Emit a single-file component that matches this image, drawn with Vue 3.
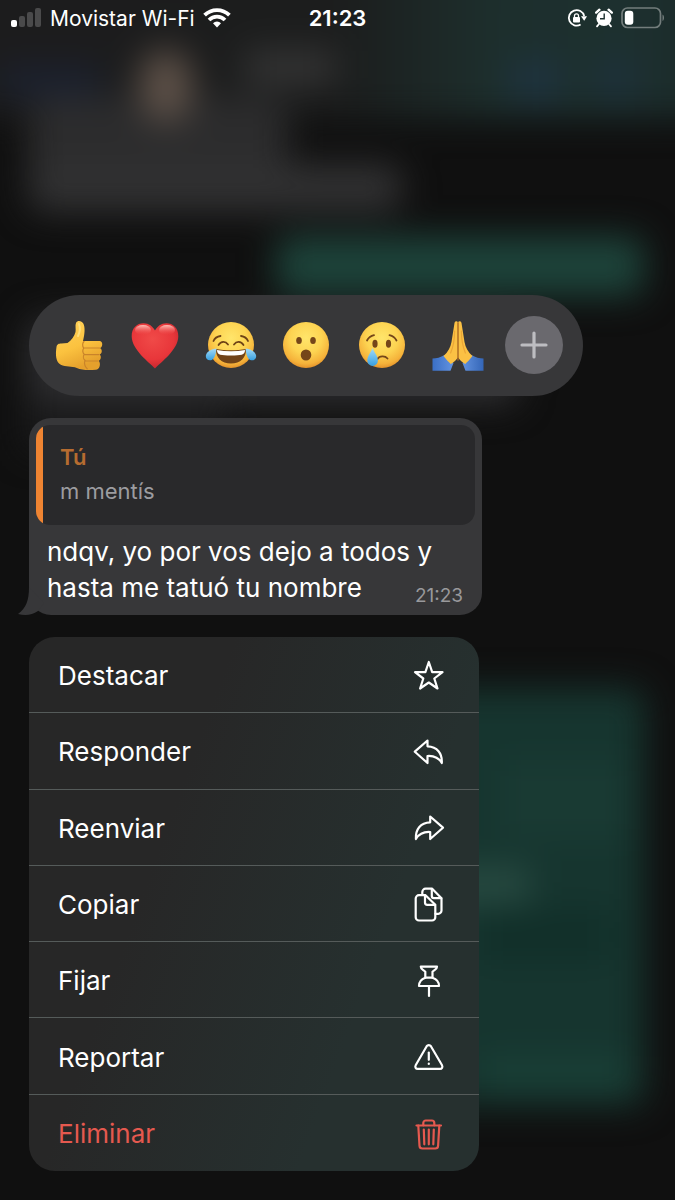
<template>
  <div class="screen">
    <!-- blurred chat behind the menu -->
    <svg class="backdrop" viewBox="0 0 675 1200" preserveAspectRatio="none" aria-hidden="true">
      <defs>
        <linearGradient id="header" x1="0" x2="1" y1="0" y2="0">
          <stop offset="0" stop-color="#1c1c1d" />
          <stop offset="0.5" stop-color="#1c1d1d" />
          <stop offset="0.7" stop-color="#1d2f2d" />
          <stop offset="0.88" stop-color="#1d302f" />
          <stop offset="1" stop-color="#1a2525" />
        </linearGradient>
        <filter id="soft" x="-50%" y="-50%" width="200%" height="200%" color-interpolation-filters="sRGB">
          <feGaussianBlur stdDeviation="17" />
        </filter>
      </defs>
      <rect width="675" height="1200" fill="#101010" />
      <g filter="url(#soft)">
        <rect x="-60" y="-60" width="795" height="178" fill="url(#header)" />
        <rect x="28" y="98" width="260" height="110" rx="16" fill="#2c2c2d" />
        <rect x="28" y="164" width="374" height="48" rx="16" fill="#313132" />
        <rect x="140" y="50" width="52" height="72" rx="26" fill="#5e5148" />
        <rect x="245" y="50" width="90" height="34" fill="#343434" />
        <rect x="0" y="66" width="100" height="30" fill="#1b2130" />
        <rect x="510" y="60" width="50" height="40" fill="#1e3340" />
        <rect x="595" y="60" width="40" height="36" fill="#1d303c" />
        <rect x="276" y="236" width="368" height="60" rx="14" fill="#1d433a" />
        <rect x="28" y="318" width="490" height="86" rx="14" fill="#2f2f31" />
        <rect x="24" y="400" width="200" height="50" fill="#1a1a1b" />
        <rect x="300" y="688" width="345" height="418" rx="14" fill="#16352f" />
        <rect x="500" y="760" width="130" height="80" fill="#193a33" />
        <rect x="440" y="866" width="90" height="38" fill="#274a41" />
        <rect x="480" y="910" width="130" height="50" fill="#112f29" />
        <rect x="480" y="1056" width="150" height="38" fill="#193f36" />
      </g>
    </svg>

    <header class="status">
      <div class="carrier">
        <svg width="32" height="20" viewBox="0 0 32 20" aria-hidden="true">
          <rect x="1" y="12" width="6" height="7" rx="2" fill="#fff" />
          <rect x="9" y="8" width="6" height="11" rx="2" fill="#4a4a4b" />
          <rect x="17" y="4" width="6" height="15" rx="2" fill="#4a4a4b" />
          <rect x="25" y="0" width="6" height="19" rx="2" fill="#4a4a4b" />
        </svg>
        <span>Movistar Wi-Fi</span>
        <svg width="28" height="20" viewBox="0 0 28 20" aria-hidden="true">
          <g fill="none" stroke="#fff" stroke-width="3.8">
            <path d="M1.6 7.2a17.6 17.6 0 0 1 24.8 0" />
            <path d="M6 12a11.4 11.4 0 0 1 16 0" />
          </g>
          <path d="M14 19.4l-4-4.2a5.6 5.6 0 0 1 8 0z" fill="#fff" />
        </svg>
      </div>
      <time class="clock">21:23</time>
      <div class="indicators">
        <svg width="20" height="20" viewBox="0 0 20 20" aria-hidden="true">
          <path d="M13.6 16.6A7.8 7.8 0 1 1 17.2 8" fill="none" stroke="#fff" stroke-width="1.8" />
          <path d="M14 8.2h6l-2.8 4.6z" fill="#fff" />
          <rect x="6" y="9" width="7" height="5.6" rx="1" fill="#fff" />
          <path d="M7.5 9.4V7.8a2 2 0 0 1 4 0v1.6" fill="none" stroke="#fff" stroke-width="1.3" />
        </svg>
        <svg width="18" height="20" viewBox="0 0 18 20" aria-hidden="true">
          <circle cx="9" cy="10.4" r="7.6" fill="#fff" />
          <path d="M1.2 4.6 4.4 1.7M16.8 4.6l-3.2-2.9" stroke="#fff" stroke-width="2.4" stroke-linecap="round" />
          <path d="M4 16l-2 2.4M14 16l2 2.4" stroke="#fff" stroke-width="1.8" stroke-linecap="round" />
          <path d="M9.2 5.6v5.2H5" fill="none" stroke="#1d302f" stroke-width="1.4" />
        </svg>
        <svg width="44" height="22" viewBox="0 0 44 22" aria-hidden="true">
          <rect x="1" y="1" width="38.5" height="19.5" rx="5.5" fill="none" stroke="#737d7c" stroke-width="1.7" />
          <rect x="3.8" y="3.8" width="8.5" height="14" rx="3" fill="#fff" />
          <path d="M41.5 7.5c2 1 2 5.5 0 6.5z" fill="#737d7c" />
        </svg>
      </div>
    </header>

    <main class="content">
      <section class="reactions" aria-label="Reacciones">
        <button type="button" aria-label="Me gusta">
          <svg viewBox="0 0 58 58">
            <defs>
              <linearGradient id="hand" x1="0" y1="0" x2="0.4" y2="1">
                <stop offset="0" stop-color="#ffd25c" />
                <stop offset="0.6" stop-color="#fbc23f" />
                <stop offset="1" stop-color="#e5a02c" />
              </linearGradient>
            </defs>
            <path d="M7.5 31c.5-3 2-3.6 5-3.6l6-.4c4-2.5 7-7 8-11 .6-3-.6-6.5.5-9 1.4-3 5.600-2.500 7.300.5 2 4 1.500 10-.3 17.500h16.500c3.600 0 3.600 6 .6 7 2.400 1.500 2.200 5.500-.4 6.500 1.800 1.700 1.500 5-.9 6.200 2.400 3.300.8 8.800-3 9-7 .6-14 .6-19-1.700-5-2-11-1-16-3.200-5-2.800-5.500-10-4.300-17.800z" fill="url(#hand)" />
            <path d="M35 25.500c-1.600 1.500-2 4.500-.2 6.600-1.500 1.800-1.300 4.700.4 6.200-1.200 1.900-1 4.700.7 6-.8 3 .2 6.500 2.300 8.500M35 32h15.500M35.500 38.600H50M36.500 45h12.500" fill="none" stroke="#c9832a" stroke-width="1.2" stroke-linecap="round" />
            <path d="M30 8c1.500 4 .5 9-1 12" fill="none" stroke="#ffe07d" stroke-width="2" stroke-linecap="round" />
          </svg>
        </button>
        <button type="button" aria-label="Me encanta">
          <svg viewBox="0 0 58 58">
            <defs>
              <radialGradient id="heart" cx="0.45" cy="0.35" r="0.75">
                <stop offset="0" stop-color="#f04a48" />
                <stop offset="0.6" stop-color="#e8363a" />
                <stop offset="1" stop-color="#b9202a" />
              </radialGradient>
              <linearGradient id="shine" x1="0" y1="0" x2="0" y2="1">
                <stop offset="0" stop-color="#ffc0b8" />
                <stop offset="1" stop-color="#f04a48" stop-opacity="0" />
              </linearGradient>
            </defs>
            <path d="M30 52.500C24 46 7 34 6.700 20.500 6.500 12 12 7.300 18.500 7.300c5.500 0 9.300 3.200 11.500 7.200 2.200-4 6-7.200 11.500-7.200C48 7.300 53.500 12 53.300 20.500 53 34 36 46 30 52.500z" fill="url(#heart)" />
            <ellipse cx="18" cy="14" rx="8" ry="5" fill="url(#shine)" />
            <ellipse cx="42" cy="14" rx="8" ry="5" fill="url(#shine)" />
          </svg>
        </button>
        <button type="button" aria-label="Me divierte">
          <svg viewBox="0 0 58 58">
            <defs>
              <radialGradient id="face" cx="0.5" cy="0.35" r="0.68">
                <stop offset="0" stop-color="#ffe56b" />
                <stop offset="0.5" stop-color="#fdd452" />
                <stop offset="0.82" stop-color="#f5b23a" />
                <stop offset="1" stop-color="#de8826" />
              </radialGradient>
              <linearGradient id="tear" x1="0" y1="0" x2="0" y2="1">
                <stop offset="0" stop-color="#a5dcf8" />
                <stop offset="1" stop-color="#379fe0" />
              </linearGradient>
            </defs>
            <circle cx="30" cy="29" r="23" fill="url(#face)" />
            <path d="M12.5 25c1-2.500 3.500-4.500 7-5M47 25c-1-2.500-3.500-4.500-7-5M17.500 29c2.500-4 7-4 9.500-.5M33 28.500c2.500-3.500 7-3.500 9.500.5" fill="none" stroke="#6f4316" stroke-width="1.8" stroke-linecap="round" />
            <path d="M15 33c9 1.800 21 1.800 30 0 .5 8.500-5.500 14.500-15 14.500s-15.500-6-15-14.500z" fill="#704319" />
            <path d="M16 34c9 1.600 19 1.600 28 0 0 5-4 5.500-14 5.500s-14-.5-14-5.500z" fill="#fff" />
            <path d="M15.500 32.500c-5 .5-9.500 3-10.500 6.500-.9 3.500 2 6 5 5.200 3.500-1 5-6 5.500-11.700zM44.500 32.500c5 .5 9.500 3 10.500 6.500.9 3.500-2 6-5 5.200-3.500-1-5-6-5.500-11.700z" fill="url(#tear)" />
          </svg>
        </button>
        <button type="button" aria-label="Me asombra">
          <svg viewBox="0 0 58 58">
            <circle cx="29" cy="29" r="23" fill="url(#face)" />
            <ellipse cx="22" cy="24.5" rx="2.8" ry="3.6" fill="#754619" />
            <ellipse cx="36" cy="24.5" rx="2.8" ry="3.6" fill="#754619" />
            <ellipse cx="29" cy="39" rx="5.3" ry="5.5" fill="#754619" />
          </svg>
        </button>
        <button type="button" aria-label="Me entristece">
          <svg viewBox="0 0 58 58">
            <circle cx="29" cy="29" r="23" fill="url(#face)" />
            <ellipse cx="22" cy="27.7" rx="2.6" ry="4" fill="#754619" />
            <ellipse cx="35.5" cy="27.7" rx="2.6" ry="4" fill="#754619" />
            <path d="M14 24.500c1.500-2.800 3.800-4.600 7-5.300M43.500 24.500c-1.500-2.800-3.800-4.600-7-5.300M24.500 43c2-3.300 7.500-3.500 10-.5" fill="none" stroke="#754619" stroke-width="1.8" stroke-linecap="round" />
            <path d="M19.500 32c1.800 4.500 5.400 8 5.400 12.600a5.300 5.300 0 0 1-10.600 0c0-4.600 3.600-8 5.200-12.600z" fill="url(#tear)" />
          </svg>
        </button>
        <button type="button" aria-label="Gracias">
          <svg viewBox="0 0 58 58">
            <defs>
              <linearGradient id="cuff" x1="0" x2="1" y1="0" y2="0">
                <stop offset="0" stop-color="#3a6fc6" />
                <stop offset="0.5" stop-color="#6c9be6" />
                <stop offset="1" stop-color="#3466b8" />
              </linearGradient>
            </defs>
            <path d="M3.500 42.500c4 0 8-1 12-3.500l9 8-3 7.800h-18zM54.500 42.500c-4 0-8-1-12-3.500l-9 8 3 7.800h18z" fill="url(#cuff)" />
            <path d="M28.800 6c-.8-1.500-3-1-3.300 1l-3 19c-1 5.500-3.500 10-8 14 2.500 3 5 6 7.300 8 3.200-2 5.700-4 7-6.500z" fill="#fbc144" />
            <path d="M29.200 6c.8-1.500 3-1 3.300 1l3 19c1 5.500 3.500 10 8 14-2.500 3-5 6-7.300 8-3.200-2-5.700-4-7-6.500z" fill="#fbc144" />
            <path d="M29 7v37" fill="none" stroke="#b8701f" stroke-width="1.3" stroke-linecap="round" />
            <path d="M25.600 15c0 8-1.500 16-4 22M32.400 15c0 8 1.500 16 4 22" fill="none" stroke="#eba637" stroke-width="1.2" stroke-linecap="round" />
          </svg>
        </button>
        <button type="button" class="more" aria-label="Más reacciones">
          <svg viewBox="0 0 58 58">
            <path d="M29 17v24M17 29h24" stroke="#bdbdc1" stroke-width="3.2" stroke-linecap="round" />
          </svg>
        </button>
      </section>

      <article class="bubble">
        <svg class="tail" width="26" height="28" viewBox="0 0 26 28" aria-hidden="true">
          <path d="M11 0c0 14-3 21-11 27 8 2 14 1 20-3l6-8z" fill="#373739" />
        </svg>
        <blockquote class="quote">
          <strong>Tú</strong>
          <p>m mentís</p>
        </blockquote>
        <div class="message">
          <p>ndqv, yo por vos dejo a todos y hasta me tatuó tu nombre</p>
          <time>21:23</time>
        </div>
      </article>

      <nav class="menu">
        <button v-for="item in items" :key="item.label" type="button" :class="{ danger: item.danger }">
          <span>{{ item.label }}</span>
          <svg viewBox="0 0 36 36" aria-hidden="true">
            <path v-for="d in item.paths" :key="d" :d="d" />
          </svg>
        </button>
      </nav>
    </main>
  </div>
</template>

<script setup>
const items = [
  {
    label: 'Destacar',
    paths: ['M17.8 4l3.4 10.200h10.300L23.300 20.500l3.200 10-8.700-6-8.700 6 3.200-10L4 14.200h10.400z']
  },
  {
    label: 'Responder',
    paths: ['M16.5 6.500L3.800 17.700l12.700 11.300v-7c6.500-.4 11 1.500 14.300 7 .6-9.500-4.500-16.400-14.300-16.700z']
  },
  {
    label: 'Reenviar',
    paths: ['M19.2 6.500L32 17.700 19.200 29v-7c-6.500-.4-11 1.500-14.300 7-.6-9.500 4.500-16.400 14.300-16.700z']
  },
  {
    label: 'Copiar',
    paths: [
      'M8 9.200h6.500l9.800 9.500v12.500a3.300 3.300 0 0 1-3.300 3.300H8a3.300 3.300 0 0 1-3.300-3.300V12.500A3.300 3.300 0 0 1 8 9.200z',
      'M14 9.500v7a2.300 2.300 0 0 0 2.300 2.300h7.700',
      'M11.300 9V6a3.300 3.300 0 0 1 3.300-3.300h6.600l9.300 9.500v12.300a3.300 3.300 0 0 1-3.300 3.300h-2.700',
      'M20.800 3v7a2.200 2.200 0 0 0 2.200 2.200h7.200'
    ]
  },
  {
    label: 'Fijar',
    paths: [
      'M9.800 3.700h16.200c0 2.500-2.500 3-4.500 5v6c4 1.300 6.500 4.300 6.500 8.300H8c0-4 2.500-7 6.300-8.300v-6c-2-2-4.500-2.500-4.500-5z',
      'M14.300 14.700h7.200',
      'M18 23v10'
    ]
  },
  {
    label: 'Reportar',
    paths: [
      'M15.700 7.200a2.500 2.500 0 0 1 4.200 0l11 18.800c1.100 1.900.2 3.900-2.100 3.900H6.900c-2.300 0-3.200-2-2.100-3.900z',
      'M17.800 13.500v7.300',
      'M17.800 24.600v.3'
    ]
  },
  {
    label: 'Eliminar',
    danger: true,
    paths: [
      'M5.500 9.500h24.500',
      'M12.300 9.300V7a2.500 2.500 0 0 1 2.500-2.500h6A2.500 2.500 0 0 1 23.300 7v2.300',
      'M7.300 9.700l1.200 20a2.900 2.900 0 0 0 2.900 2.800h12.800a2.900 2.900 0 0 0 2.900-2.800l1.200-20',
      'M12.800 13.500l.5 14.800M17.800 13.500v14.800M22.800 13.500l-.5 14.800'
    ]
  }
]
</script>

<style>
body {
  margin: 0;
  background: #101010;
}
</style>

<style scoped>
.screen {
  position: relative;
  min-height: 100vh;
  box-sizing: border-box;
  padding-bottom: 29px;
  overflow: hidden;
  color: #fff;
  font-family: Inter, "Liberation Sans", sans-serif;
}

.backdrop {
  position: absolute;
  inset: 0;
  width: 100%;
  height: 100%;
}

p,
blockquote {
  margin: 0;
}

button {
  padding: 0;
  border: 0;
  background: none;
  color: inherit;
  font: inherit;
  cursor: pointer;
}

.status {
  position: relative;
  display: grid;
  grid-template-columns: 1fr auto 1fr;
  align-items: center;
  height: 36px;
  padding: 0 10px;
  font-size: 21px;
}

.carrier,
.indicators {
  display: flex;
  align-items: center;
  gap: 8px;
}

.indicators {
  justify-content: flex-end;
}

.clock {
  font-size: 22px;
  font-weight: 600;
}

.content {
  position: relative;
  display: flex;
  flex-direction: column;
  align-items: flex-start;
  gap: 22px;
  padding: 259px 29px 0;
}

.reactions {
  display: flex;
  gap: 18px;
  padding: 21px 20px 22px;
  border-radius: 52px;
  background: #373739;
}

.reactions button {
  width: 58px;
  height: 58px;
  border-radius: 50%;
}

.reactions svg {
  display: block;
}

.reactions .more {
  background: #6a696e;
}

.bubble {
  position: relative;
  box-sizing: border-box;
  width: 100%;
  max-width: 453px;
  padding: 7px;
  border-radius: 22px;
  background: #373739;
}

.tail {
  position: absolute;
  left: -11px;
  bottom: 0;
}

.quote {
  padding: 15px 24px 17px;
  border-radius: 14px;
  background: linear-gradient(to right, #ef8432 7px, #29292b 7px);
  font-size: 22px;
  line-height: 34px;
}

.quote strong {
  color: #b66c30;
  font-weight: 600;
}

.quote p {
  color: #9c9ca0;
}

/* the time floats beside the last line of text */
.message {
  display: flow-root;
  padding: 9px 12px 2px 11px;
  font-size: 26px;
  line-height: 36px;
}

.message p {
  display: inline;
}

.message time {
  float: right;
  margin-top: 16px;
  color: #99999c;
  font-size: 19px;
  line-height: 20px;
}

.menu {
  display: grid;
  grid-auto-rows: 1fr;
  width: 100%;
  max-width: 450px;
  min-height: 534px;
  overflow: hidden;
  border-radius: 26px;
  background: linear-gradient(110deg, #272727 32%, #26302f 72%);
}

.menu button {
  display: flex;
  align-items: center;
  justify-content: space-between;
  padding: 2px 32px 0 29px;
  border-bottom: 1px solid #555b5a;
  font-size: 26px;
}

.menu button:last-child {
  border-bottom: 0;
}

.menu svg {
  width: 36px;
  height: 36px;
  fill: none;
  stroke: currentColor;
  stroke-width: 2.2;
  stroke-linecap: round;
  stroke-linejoin: round;
}

.menu .danger {
  color: #e5594f;
}
</style>
